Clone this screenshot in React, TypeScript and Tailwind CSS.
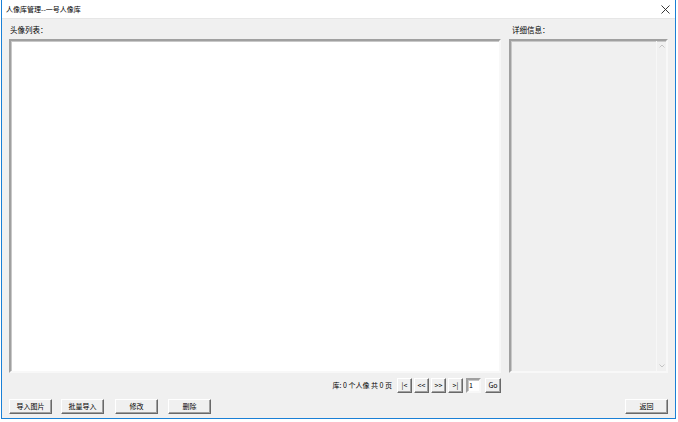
import React from "react"

const font = { fontFamily: '"Noto Sans CJK SC", "Noto Sans", sans-serif' }

// classic raised push button
const Btn = ({ label, className = "" }: { label: string; className?: string }) => (
  <button
    type="button"
    className={`h-[15px] bg-[#f0f0f0] border border-t-white border-l-white border-r-[#696969] border-b-[#696969] shadow-[inset_-1px_-1px_0_#a0a0a0] text-[7px] leading-none text-black flex items-center justify-center ${className}`}
  >
    {label}
  </button>
)

// sunken edit/list frame
const sunken =
  "border-2 border-t-[#a0a0a0] border-l-[#a0a0a0] border-r-[#f8f8f8] border-b-[#f8f8f8] shadow-[inset_1px_1px_0_#c8c8c8]"

const App = () => {
  return (
    <div className="w-[678px] h-[422px] bg-white" style={font}>
      <div className="ml-[1px] w-[675px] h-[419px] border-x border-b border-[#1a80d6] flex flex-col">
        {/* title bar */}
        <div className="h-[19px] bg-white flex items-center justify-between pl-[4px] pr-[5px] pt-[1px] border-b border-[#e6e6e6]">
          <span className="text-[7px] text-black">人像库管理--一号人像库</span>
          <svg width="9" height="9" viewBox="0 0 9 9">
            <path d="M0.5 0.5 L8.5 8.5 M8.5 0.5 L0.5 8.5" stroke="#222" strokeWidth="0.9" />
          </svg>
        </div>

        {/* content */}
        <div className="flex-1 bg-[#f0f0f0] px-[7px] flex flex-col">
          <div className="flex gap-[8px]">
            {/* avatar list */}
            <div className="w-[492px] flex flex-col">
              <div className="pt-[5px] h-[17px] text-[7.5px] leading-[12px] pl-[1px] text-black">头像列表：</div>
              <div className={`mt-[3px] h-[334px] bg-white ${sunken}`} />
              <div className="mt-[5px] h-[15px] flex items-center justify-end gap-[2px]">
                <span className="text-[7px] text-black mr-[3px] leading-none">库: 0 个人像 共 0 页</span>
                <Btn label="|<" className="w-[15px]" />
                <Btn label="<<" className="w-[15px]" />
                <Btn label=">>" className="w-[15px]" />
                <Btn label=">|" className="w-[15px]" />
                <div className={`ml-[1px] w-[15px] h-[15px] bg-white ${sunken} text-[7px] leading-[11px] pl-[1px]`}>1</div>
                <Btn label="Go" className="ml-[2px] w-[16px]" />
              </div>
            </div>

            {/* detail info */}
            <div className="flex-1 flex flex-col">
              <div className="pt-[5px] h-[17px] text-[7.5px] leading-[12px] pl-[3px] text-black">详细信息：</div>
              <div className={`mt-[3px] h-[334px] bg-[#f0f0f0] ${sunken} flex justify-end`}>
                <div className="w-[10px] border-l border-[#f7f7f7] flex flex-col items-center justify-between py-[3px]">
                  <svg width="6" height="4" viewBox="0 0 6 4">
                    <path d="M0.5 3.5 L3 1 L5.5 3.5" stroke="#c4c4c4" fill="none" strokeWidth="1" />
                  </svg>
                  <svg width="6" height="4" viewBox="0 0 6 4">
                    <path d="M0.5 0.5 L3 3 L5.5 0.5" stroke="#c4c4c4" fill="none" strokeWidth="1" />
                  </svg>
                </div>
              </div>
            </div>
          </div>

          {/* action buttons */}
          <div className="mt-[6px] flex items-center">
            <Btn label="导入图片" className="w-[43px]" />
            <Btn label="批量导入" className="ml-[9px] w-[43px]" />
            <Btn label="修改" className="ml-[11px] w-[43px]" />
            <Btn label="删除" className="ml-[10px] w-[43px]" />
            <Btn label="返回" className="ml-auto w-[43px]" />
          </div>
        </div>
      </div>
    </div>
  )
}

export default App
